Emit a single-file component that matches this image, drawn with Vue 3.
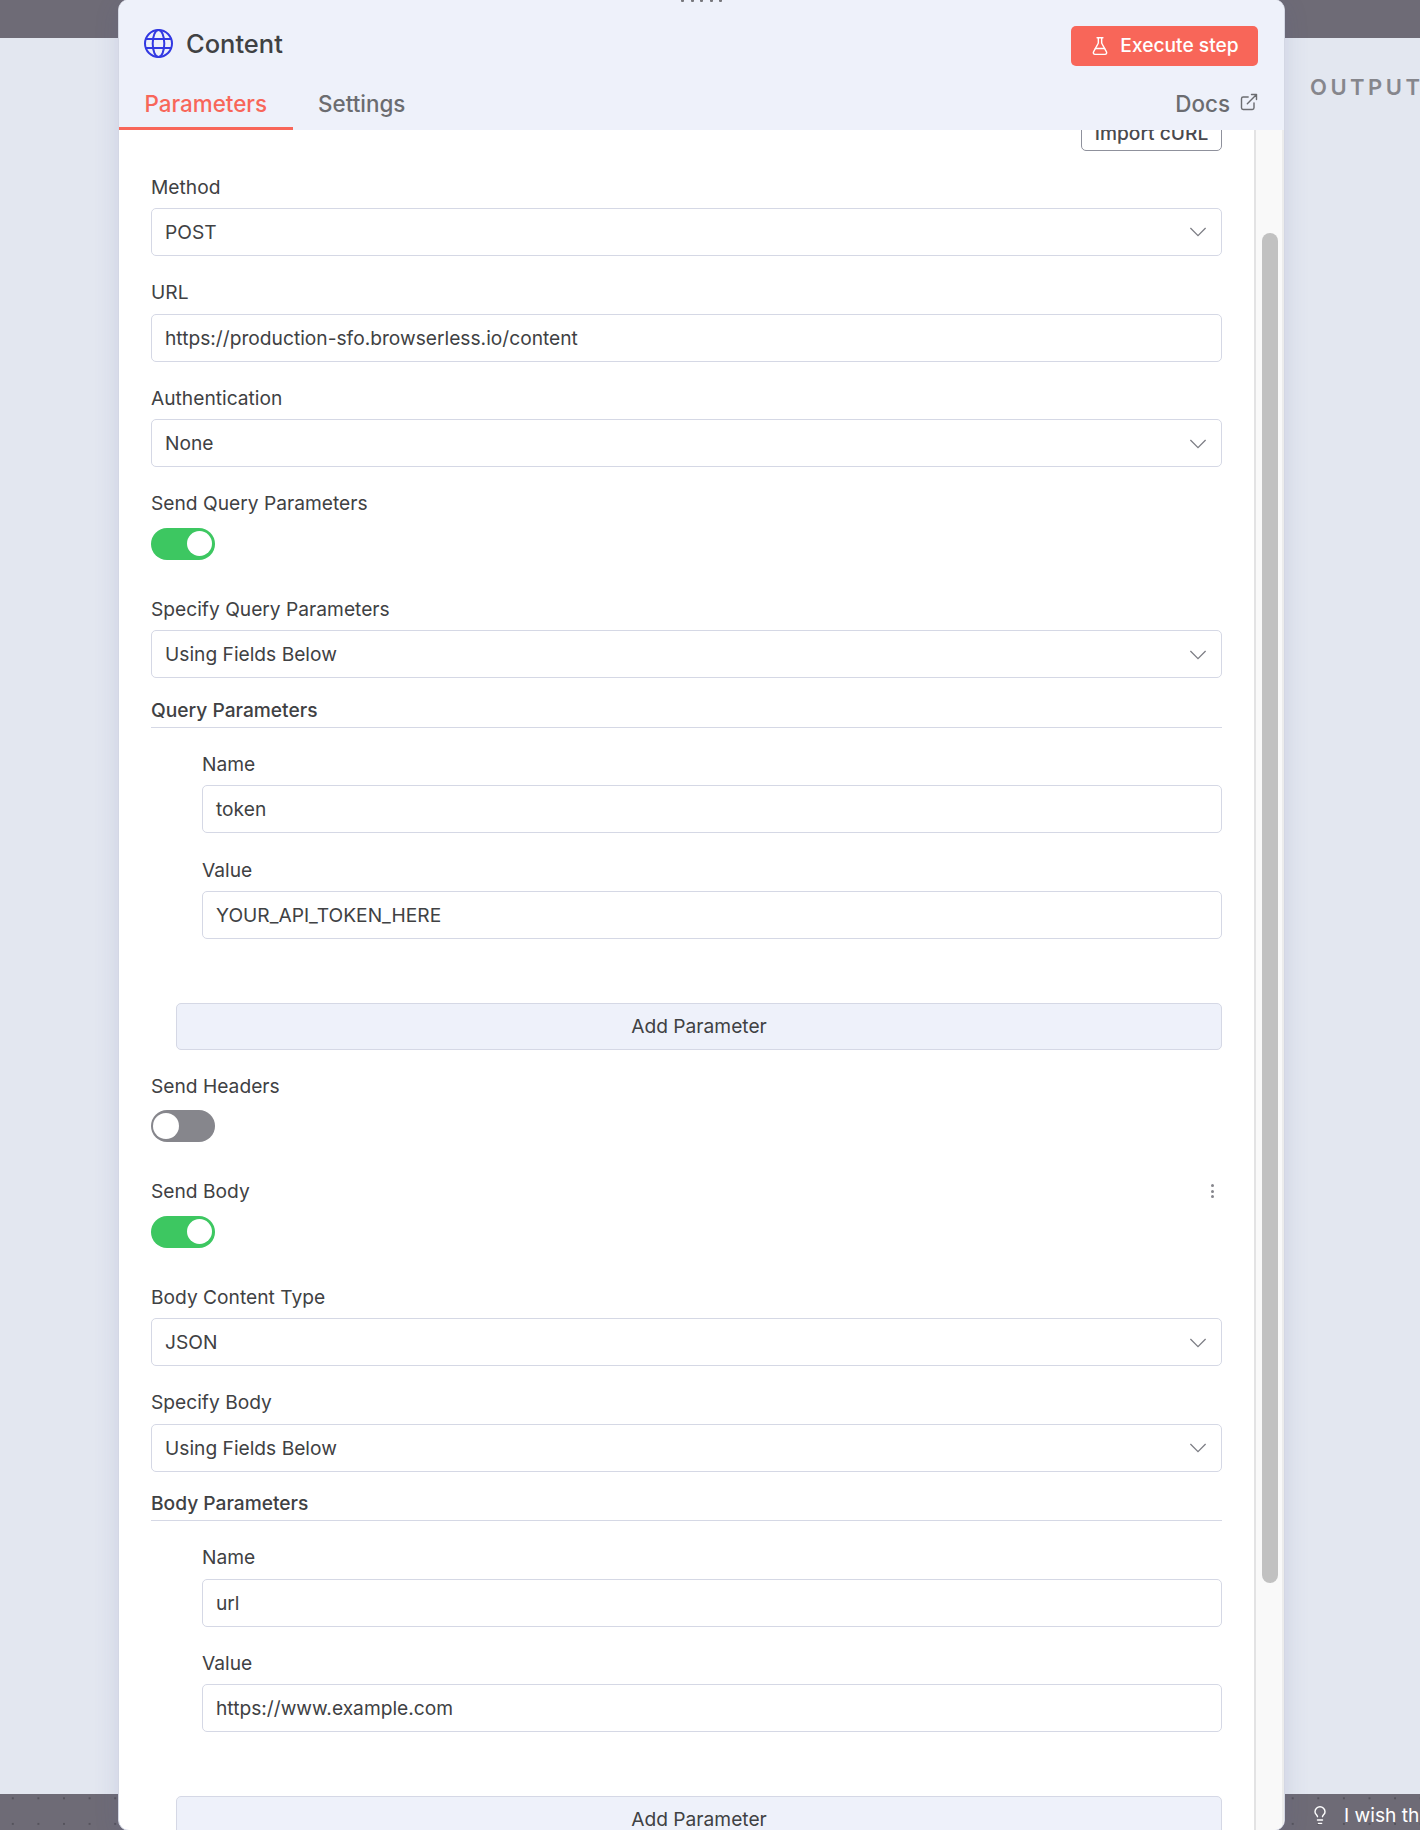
<script setup>
import { ref } from 'vue'

const tabs = ['Parameters', 'Settings']
const activeTab = ref('Parameters')

const fields = ref([
  { id: 'method', type: 'select', label: 'Method', value: 'POST' },
  { id: 'url', type: 'input', label: 'URL', value: 'https://production-sfo.browserless.io/content' },
  { id: 'auth', type: 'select', label: 'Authentication', value: 'None' },
  { id: 'sendQuery', type: 'switch', label: 'Send Query Parameters', value: true },
  { id: 'specifyQuery', type: 'select', label: 'Specify Query Parameters', value: 'Using Fields Below' },
  {
    id: 'query',
    type: 'group',
    label: 'Query Parameters',
    items: [
      { label: 'Name', value: 'token' },
      { label: 'Value', value: 'YOUR_API_TOKEN_HERE' }
    ]
  },
  { id: 'sendHeaders', type: 'switch', label: 'Send Headers', value: false },
  { id: 'sendBody', type: 'switch', label: 'Send Body', value: true, menu: true },
  { id: 'bodyType', type: 'select', label: 'Body Content Type', value: 'JSON' },
  { id: 'specifyBody', type: 'select', label: 'Specify Body', value: 'Using Fields Below' },
  {
    id: 'body',
    type: 'group',
    label: 'Body Parameters',
    items: [
      { label: 'Name', value: 'url' },
      { label: 'Value', value: 'https://www.example.com' }
    ]
  }
])

const toggle = (field) => {
  field.value = !field.value
}
</script>

<template>
  <div class="page">
    <div class="side side-left">
      <div class="side-panel"></div>
      <div class="canvas-strip"></div>
    </div>

    <div class="node-panel">
      <header class="panel-header">
        <div class="drag-handle">
          <span v-for="n in 5" :key="n"></span>
        </div>
        <div class="title-row">
          <svg class="globe" viewBox="0 0 31 31">
            <circle cx="15.5" cy="15.5" r="13.5" />
            <ellipse cx="15.5" cy="15.5" rx="5.8" ry="13.5" />
            <path d="M2.8 10.9h25.4M2.8 20.1h25.4" />
          </svg>
          <h1 class="title">Content</h1>
          <button class="execute-btn">
            <svg class="icon" viewBox="0 0 24 24">
              <path d="M14 2v6a2 2 0 0 0 .245.96l5.51 10.08A2 2 0 0 1 18 22H6a2 2 0 0 1-1.755-2.96l5.51-10.08A2 2 0 0 0 10 8V2" />
              <path d="M6.453 15h11.094M8.5 2h7" />
            </svg>
            <span>Execute step</span>
          </button>
        </div>
        <nav class="tabs">
          <button
            v-for="tab in tabs"
            :key="tab"
            class="tab"
            :class="{ active: tab === activeTab }"
            @click="activeTab = tab"
          >{{ tab }}</button>
          <a class="docs">
            Docs
            <svg class="icon" viewBox="0 0 24 24">
              <path d="M15 3h6v6M10 14 21 3" />
              <path d="M18 13v6a2 2 0 0 1-2 2H5a2 2 0 0 1-2-2V8a2 2 0 0 1 2-2h6" />
            </svg>
          </a>
        </nav>
      </header>

      <div class="panel-body">
        <div class="form">
          <button class="import-btn">Import cURL</button>

          <template v-for="field in fields" :key="field.id">
            <section v-if="field.type === 'group'" class="group">
              <h2 class="group-title">{{ field.label }}</h2>
              <div class="group-items">
                <div v-for="item in field.items" :key="item.label" class="field">
                  <div class="label">{{ item.label }}</div>
                  <div class="control">{{ item.value }}</div>
                </div>
              </div>
              <button class="add-btn">Add Parameter</button>
            </section>

            <div v-else class="field">
              <div class="label">
                {{ field.label }}
                <span v-if="field.menu" class="more"><i></i><i></i><i></i></span>
              </div>
              <div v-if="field.type === 'switch'" class="switch-row">
                <button class="switch" :class="{ on: field.value }" @click="toggle(field)">
                  <span class="knob"></span>
                </button>
              </div>
              <div v-else class="control">
                {{ field.value }}
                <svg v-if="field.type === 'select'" class="chevron" viewBox="0 0 18 10">
                  <path d="M1.4 1 9 8.6 16.6 1" />
                </svg>
              </div>
            </div>
          </template>
        </div>

        <div class="scrollbar">
          <div class="thumb"></div>
        </div>
      </div>
    </div>

    <div class="side side-right">
      <div class="side-panel">
        <span class="output-title">OUTPUT</span>
      </div>
      <div class="canvas-strip">
        <svg class="icon bulb" viewBox="0 0 24 24">
          <path d="M15 14c.2-1 .7-1.7 1.5-2.5 1-.9 1.5-2.2 1.5-3.5A6 6 0 0 0 6 8c0 1 .2 2.2 1.5 3.5.7.7 1.3 1.5 1.5 2.5" />
          <path d="M9 18h6M10 22h4" />
        </svg>
        <span class="wish">I wish this node would...</span>
      </div>
    </div>
  </div>
</template>

<style>
body {
  margin: 0;
  overflow: hidden;
}
</style>

<style scoped>
.page {
  display: flex;
  width: 1420px;
  height: 1830px;
  overflow: hidden;
  background: #6e6b76;
  color: #404143;
  font-family: Inter, sans-serif;
  font-size: 19.2px;
}

button {
  font-family: inherit;
  font-size: inherit;
  color: inherit;
  padding: 0;
  border: none;
  background: none;
  cursor: pointer;
}

.icon {
  width: 20px;
  height: 20px;
  flex: none;
  fill: none;
  stroke: currentColor;
  stroke-width: 1.7;
  stroke-linecap: round;
  stroke-linejoin: round;
}

/* surroundings */
.side {
  display: flex;
  flex-direction: column;
  padding-top: 38px;
  box-sizing: border-box;
  overflow: hidden;
}

.side-left {
  width: 118px;
  flex: none;
}

.side-right {
  flex: 1;
  min-width: 0;
}

.side-panel {
  flex: 1;
  background: #e3e7f0;
}

.side-right .side-panel {
  padding: 35px 0 0 25px;
}

.output-title {
  color: #86868c;
  font-size: 22px;
  line-height: 28px;
  font-weight: 600;
  letter-spacing: 3.5px;
}

.canvas-strip {
  display: flex;
  align-items: center;
  height: 36px;
  color: #fff;
  white-space: nowrap;
  background-color: #6e6b76;
  background-image: radial-gradient(circle, #55535c 1px, transparent 1.4px);
  background-size: 25.6px 25.6px;
  background-position: 0 -8.5px;
}

.side-right .canvas-strip {
  gap: 14px;
  box-sizing: border-box;
  padding: 5px 0 0 25px;
  background-position: -5.1px -8.5px;
}

.wish {
  padding-top: 1px;
}

/* node panel */
.node-panel {
  z-index: 1;
  display: flex;
  flex-direction: column;
  flex: none;
  box-sizing: border-box;
  width: 1167px;
  height: 1832px;
  margin-top: -1px;
  border: 1px solid #d3d7e4;
  border-radius: 11px;
  overflow: hidden;
  background: #fff;
  box-shadow: 0 6px 24px rgba(80, 90, 150, 0.16);
}

.panel-header {
  flex: none;
  height: 130px;
  background: #eef1fa;
}

.drag-handle {
  display: flex;
  justify-content: center;
  gap: 6.5px;
  height: 2px;
}

.drag-handle span {
  width: 3px;
  background: #77777c;
  border-radius: 0 0 1px 1px;
}

.title-row {
  display: flex;
  align-items: center;
  height: 40px;
  padding: 24px 26px 0 24px;
}

.globe {
  width: 31px;
  height: 31px;
  margin-top: -5px;
  fill: none;
  stroke: #3239e2;
  stroke-width: 2;
}

.title {
  flex: 1;
  margin: -4px 0 0 12px;
  font-size: 25.5px;
  line-height: 32px;
  font-weight: 500;
}

.execute-btn {
  display: flex;
  align-items: center;
  justify-content: center;
  gap: 10px;
  width: 187px;
  height: 40px;
  border-radius: 5px;
  background: #f86659;
  color: #fff;
  font-weight: 500;
}

.execute-btn span {
  margin-top: -2px;
}

.tabs {
  display: flex;
  height: 48px;
  margin-top: 16px;
  font-size: 22.4px;
  font-weight: 500;
  color: #6b6c70;
}

.tab {
  box-sizing: border-box;
  padding: 0 25.5px 3px;
  border-bottom: 3px solid transparent;
  font-weight: 500;
}

.tab.active {
  color: #f86659;
  border-bottom-color: #f86659;
}

.docs {
  display: flex;
  align-items: center;
  gap: 9px;
  margin-left: auto;
  padding: 0 25px 6px 0;
}

.docs .icon {
  margin-top: -3px;
}

/* body */
.panel-body {
  flex: 1;
  display: flex;
  min-height: 0;
  overflow: hidden;
}

.form {
  flex: 1;
  padding: 0 32px;
}

.import-btn {
  display: block;
  box-sizing: border-box;
  width: 141px;
  height: 41px;
  margin: -20px 0 24.4px auto;
  padding-top: 5px;
  border: 1px solid #8f919c;
  border-radius: 5px;
  font-weight: 500;
  color: #4a4a4e;
}

.field {
  height: 105.6px;
}

.label {
  display: flex;
  align-items: center;
  justify-content: space-between;
  height: 22.5px;
  margin-bottom: 10.1px;
}

.control {
  display: flex;
  align-items: center;
  justify-content: space-between;
  box-sizing: border-box;
  height: 48px;
  padding: 0 14px 0 13px;
  border: 1px solid #d5d8e5;
  border-radius: 5px;
  background: #fff;
}

.chevron {
  width: 18px;
  height: 10px;
  margin-top: 1px;
  fill: none;
  stroke: #7d7e85;
  stroke-width: 1.3;
}

.switch-row {
  padding-top: 3px;
}

.switch {
  display: flex;
  align-items: center;
  box-sizing: border-box;
  width: 64px;
  height: 32px;
  padding: 0 2px;
  border-radius: 16px;
  background: #86868c;
}

.switch.on {
  justify-content: flex-end;
  padding-right: 3px;
  background: #3dc761;
}

.knob {
  width: 26px;
  height: 26px;
  border-radius: 50%;
  background: #fff;
}

.switch.on .knob {
  width: 25px;
  height: 25px;
}

.more {
  display: flex;
  flex-direction: column;
  gap: 2.6px;
  margin-right: 8px;
}

.more i {
  width: 3px;
  height: 3px;
  border-radius: 50%;
  background: #86868c;
}

/* parameter groups */
.group {
  display: flow-root;
  height: 371px;
}

.group-title {
  height: 29px;
  margin: -6.5px 0 24.8px;
  padding-top: 1px;
  border-bottom: 1px solid #d5d8e5;
  font-size: inherit;
  font-weight: 550;
  line-height: 24px;
}

.group-items {
  padding-left: 51px;
}

.add-btn {
  display: block;
  box-sizing: border-box;
  width: calc(100% - 25px);
  height: 47px;
  margin: 38.7px 0 0 25px;
  border: 1px solid #d5d8e5;
  border-radius: 5px;
  background: #eef1fa;
}

.scrollbar {
  box-sizing: border-box;
  width: 30px;
  padding: 103px 4px 0 6px;
  border-left: 2px solid #e3e3e4;
  border-right: 2px solid #ececec;
  background: #f9f9f9;
}

.thumb {
  height: 1350px;
  border-radius: 8px;
  background: #c1c1c1;
}
</style>
